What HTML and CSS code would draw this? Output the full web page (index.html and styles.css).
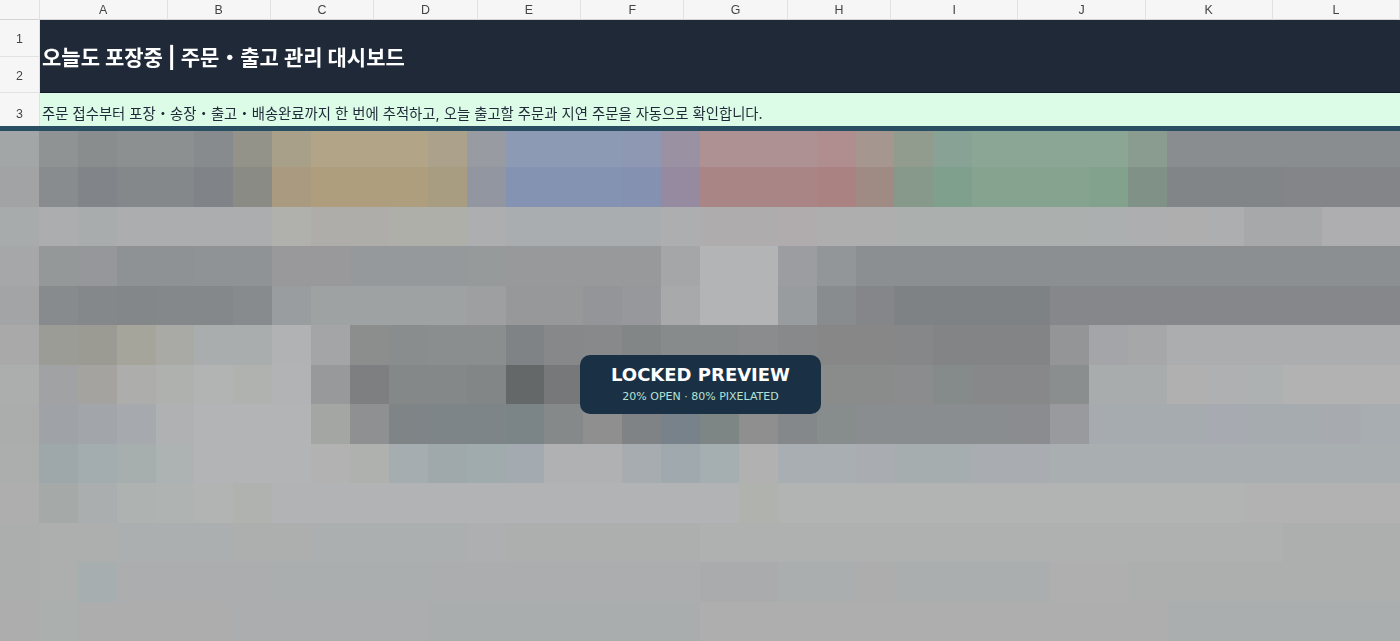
FILE: index.html
```html
<!DOCTYPE html>
<html lang="ko">
<head>
<meta charset="utf-8">
<title>오늘도 포장중</title>
<link rel="stylesheet" href="styles.css">
</head>
<body>
<main class="preview">
  <div class="sheet">
    <div class="corner"></div>
    <div class="col col-wide">A</div>
    <div class="col">B</div>
    <div class="col">C</div>
    <div class="col">D</div>
    <div class="col">E</div>
    <div class="col">F</div>
    <div class="col">G</div>
    <div class="col">H</div>
    <div class="col col-wide">I</div>
    <div class="col col-wide">J</div>
    <div class="col col-wide">K</div>
    <div class="col col-wide">L</div>
    <div class="rownum r1">1</div>
    <div class="rownum r2">2</div>
    <div class="rownum r3">3</div>
    <div class="title">오늘도 포장중 | 주문・출고 관리 대시보드</div>
    <div class="subtitle">주문 접수부터 포장・송장・출고・배송완료까지 한 번에 추적하고, 오늘 출고할 주문과 지연 주문을 자동으로 확인합니다.</div>
  </div>
  <div class="mosaic" id="mosaic"></div>
  <div class="badge">
    <div class="badge-title">LOCKED PREVIEW</div>
    <div class="badge-sub">20% OPEN · 80% PIXELATED</div>
  </div>
</main>
<script src="mosaic.js"></script>
</body>
</html>
```
FILE: styles.css
```css
* { box-sizing: border-box; }
html, body { margin: 0; height: 100%; background: #fff; }
body { overflow: hidden; font-family: "Liberation Sans", "Noto Sans CJK KR", sans-serif; }
.preview { position: relative; width: 1400px; height: 641px; overflow: hidden; }
.sheet {
  display: grid;
  grid-template-columns: 40px 127.5px repeat(7, 103.4px) repeat(4, 127.2px);
  grid-template-rows: 20px 36.5px 36.5px 37px;
  background: #fff;
  filter: blur(0.35px);
}
.corner, .col, .rownum {
  background: #f6f6f6;
  color: #444;
  border-right: 1px solid #e2e2e2;
  border-bottom: 1px solid #d4d4d4;
  display: flex;
  align-items: center;
  justify-content: center;
  font-size: 12.4px;
}
.col { padding-top: 1px; }
.rownum { grid-column: 1; padding-top: 2px; border-bottom-color: #e2e2e2; }
.r1 { grid-row: 2; } .r2 { grid-row: 3; padding-top: 3px; } .r3 { grid-row: 4; padding-top: 5px; }
.title {
  grid-column: 2 / -1;
  grid-row: 2 / 4;
  background: #1f2937;
  color: #fff;
  font-family: "Inter", "Noto Sans CJK KR", sans-serif;
  font-weight: 700;
  font-size: 21px;
  display: flex;
  align-items: center;
  padding-left: 2px;
  border-bottom: 1px solid #111827;
}
.subtitle {
  grid-column: 2 / -1;
  grid-row: 4;
  background: #dcfce7;
  color: #1f2937;
  font-family: "Inter", "Noto Sans CJK KR", sans-serif;
  font-size: 14.36px;
  display: flex;
  align-items: center;
  padding: 1px 0 0 2px;
  white-space: nowrap;
}
.mosaic {
  position: absolute;
  left: 0;
  right: 0;
  top: 128px;
  height: 513px;
  display: grid;
  grid-template-columns: repeat(36, 1fr);
  grid-template-rows: repeat(13, 1fr);
}
.mosaic::before {
  content: "";
  position: absolute;
  left: 0;
  right: 0;
  top: -2px;
  height: 5px;
  background: #2a4f63;
}
.badge {
  position: absolute;
  left: 580px;
  top: 355px;
  width: 241px;
  height: 59px;
  padding-bottom: 3px;
  border-radius: 10px;
  background: #1a3045;
  display: flex;
  flex-direction: column;
  align-items: center;
  justify-content: center;
  gap: 5px;
  font-family: "DejaVu Sans", sans-serif;
}
.badge-title { color: #fff; font-weight: 700; font-size: 18px; line-height: 21px; }
.badge-sub { color: #b7e1d3; font-size: 11px; line-height: 13px; }
```
FILE: mosaic.js
```js
// Each row: "colour*count" runs across the 36 mosaic columns.
var rows = [
  "a3a6a6 909394 8a8d8e 8c9091*2 888b8d 939389 a9a08a b1a487*3 aca18a 989ba2 8c9ab3*3 8e98b3 9a92a3 ae9293*3 b08d8e a59690 919c8f 88a395 8ca696*4 8a9b90 898d8f*3 8a8d8f*3",
  "a2a3a4 898c8e 818488 85888b*2 808388 8a8b84 a99a80 ae9e7d*3 a99d81 9296a0 8593b3*3 8591b0 968aa0 aa8585*3 ab8282 a08a84 87998a 7ea08c 86a38f*3 82a28d 809288 818588*3 838589*3",
  "a8abab acadae a8acac acadae*4 b0b0ad aeada9*2 aeafa8*2 adaeb0 aaadb0*4 adaeaf aeacad*2 b0acad aeaeae*2 abafad*5 abafaf adaeaf aeaeaf adaeaf a6a8a9*2 aeaeb0*2",
  "a6a7a8 949899 96979a 8e9294*2 8f9395*2 99999c*2 96999b*3 979a9b 98999b*3 97999a a5a6a7 b3b4b5*2 9c9da1 929698 8c8f92*14",
  "a3a4a5 878b8e 85888a 83878a 84888a 85888b 888b8d 9a9d9f 9fa2a3*4 9e9fa1 96989a*2 949598 97989b a8a9aa b3b4b5*2 989c9e 888c8e 84868a 7f8285*4 85878a*9",
  "a9a9a9 9b9c95 9c9b93 a5a59c a9a9a5 a9adad*2 b1b2b3 a4a5a6 8c8e8d 8a8d8e 8a8e8f*2 808385 86888a 88898a 838686 888b8c*2 8b8c8d 88898a 878788*2 868788 828485*3 949596 a4a5a8 a6a7a8 acadae*6",
  "acaeae a0a2a4 a4a3a0 adadac afb1ae b2b3b3 b0b2af b2b3b4 98999a 7d7f81 858888*2 838686 646868 767879 838586 858788*5 8a8c8c*2 8b8c8d 858a8a 878889*2 8a8e8e a9acad*2 b0b0b0 aeb0b1 aeb1b1 b2b2b2*3",
  "abacac 9fa3a8 a2a6ab a6aaaf b0b1b2 b3b4b5*3 a4a6a4 8f9092 7f8587 7d8588*2 7b8487 86898a 8f8f90 7f8386 78828a 7e8585 908f8f 84888a 878c8d 8a8d90*2 898d8f*2 8a8c90 999a9e a6abb0*3 a7aab0 a5abae*2 a7aaae a7adb0",
  "acaeae 9ea8ab a3acae a6aeae adb2b3 b3b4b5*3 b1b2b1 afb1ae a5adb0 9fa9ac a0abad a3abb0 b0b1b2*2 a6acaf a0a9ad a5aeb0 b1b1b2 a8aeb1*2 a9adb1 a6adae*2 a9acb0*2 a9aeb1*9",
  "aeaeae a5a9a8 abaeae aeb2b0 afb3b2 b2b3b3 b0b2b0 b2b3b4*12 b0b2ae b2b3b3*12 b2b2b2*4",
  "acaeae adaeae*2 abafaf*3 adafaf*2 acafaf*4 aeafb0 adafaf*5 afb0b0*15 acafae*3",
  "acaeae adaeae a7aeb0 acadae*4 abaeaf*4 acadae*7 aaabad*2 aaaeaf*2 adadad abaeae*4 afafaf*2 acafae*7",
  "adadad abafae adadae*4 abadae*5 aaadad*7 aeaeae*12 abaeae*6"
];
var host = document.getElementById("mosaic");
rows.forEach(function (row) {
  row.split(" ").forEach(function (run) {
    var parts = run.split("*");
    var n = parseInt(parts[1] || "1", 10);
    var cell = document.createElement("div");
    cell.style.background = "#" + parts[0];
    cell.style.gridColumn = "span " + n;
    host.appendChild(cell);
  });
});
```
